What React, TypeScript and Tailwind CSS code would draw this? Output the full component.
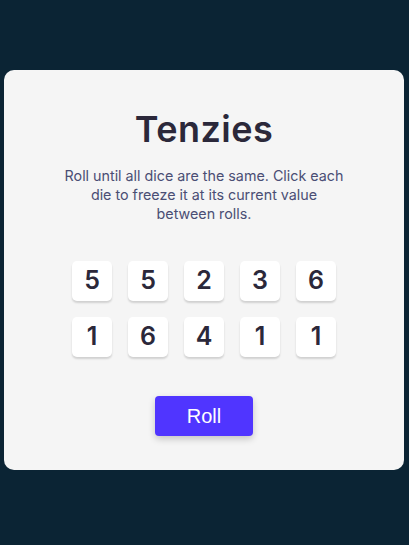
import React, { useState } from "react";

const initialDice = [5, 5, 2, 3, 6, 1, 6, 4, 1, 1];

export default function App() {
  const [dice, setDice] = useState(
    initialDice.map((value, id) => ({ id, value, held: false }))
  );

  function roll() {
    setDice((prev) =>
      prev.map((d) =>
        d.held ? d : { ...d, value: Math.ceil(Math.random() * 6) }
      )
    );
  }

  function hold(id: number) {
    setDice((prev) =>
      prev.map((d) => (d.id === id ? { ...d, held: !d.held } : d))
    );
  }

  return (
    <main className="min-h-[545px] bg-[#0B2434] pt-[70px] font-['Inter',sans-serif]">
      <div className="ml-1 flex h-[400px] w-[400px] flex-col items-center rounded-[10px] bg-[#F5F5F5] pt-[39px]">
        <h1 className="text-[36px] font-semibold leading-[40px] tracking-[0.5px] text-[#2B283A]">
          Tenzies
        </h1>
        <p className="mt-[17px] w-[284px] text-center text-[14.3px] leading-[19px] text-[#4A4E74]">
          Roll until all dice are the same. Click each die to freeze it at its
          current value between rolls.
        </p>
        <div className="mt-[38px] grid grid-cols-5 gap-4">
          {dice.map((d) => (
            <button
              key={d.id}
              onClick={() => hold(d.id)}
              className={`flex h-10 w-10 items-center justify-center rounded-[5px] text-[25px] font-semibold text-[#2B283A] shadow-[0_2px_2px_rgba(0,0,0,0.15)] ${
                d.held ? "bg-[#59E391]" : "bg-white"
              }`}
            >
              {d.value}
            </button>
          ))}
        </div>
        <button
          onClick={roll}
          className="mt-[39px] h-10 w-[98px] rounded-[4px] bg-[#5035FF] font-['Liberation_Sans',Arial,sans-serif] text-[20px] text-white shadow-[0_3px_7px_rgba(0,0,0,0.2)]"
        >
          Roll
        </button>
      </div>
    </main>
  );
}
